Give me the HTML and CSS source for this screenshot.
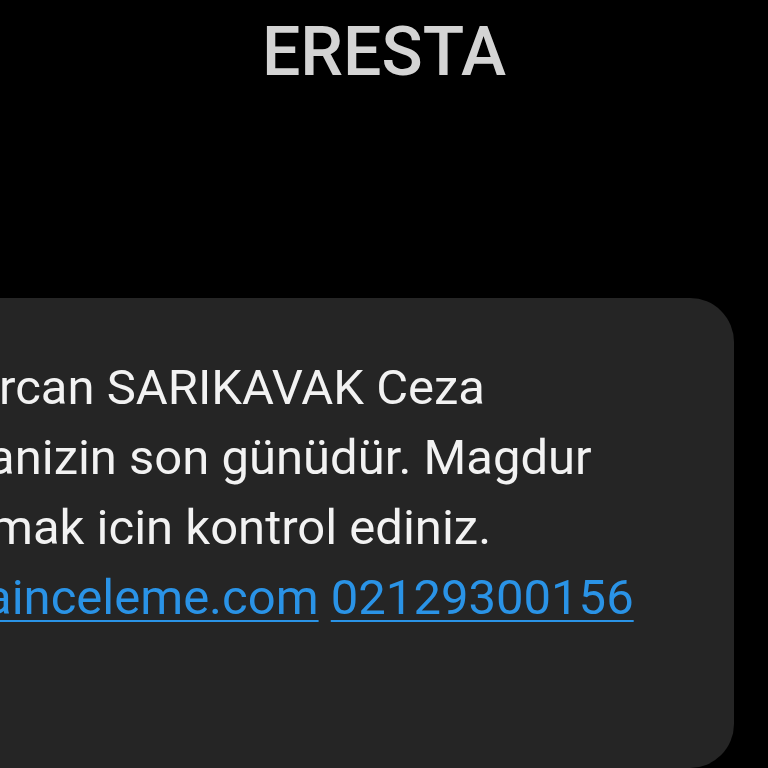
FILE: index.html
```html
<!DOCTYPE html>
<html lang="tr">
<head>
<meta charset="utf-8">
<title>ERESTA</title>
<link rel="stylesheet" href="styles.css">
</head>
<body>
<div class="screen">
  <header class="title">ERESTA</header>
  <div class="bubble">
    <div class="line l1">rcan SARIKAVAK Ceza</div>
    <div class="line l2">anizin son günüdür. Magdur</div>
    <div class="line l3">mak icin kontrol ediniz.</div>
    <div class="line l4"><a class="link" href="#">ainceleme.com</a> <a class="link" href="#">02129300156</a></div>
  </div>
</div>
</body>
</html>
```
FILE: styles.css
```css
html, body {
  margin: 0;
  padding: 0;
  background: #000;
}
.screen {
  width: 768px;
  height: 768px;
  overflow: hidden;
  background: #000;
  font-family: Roboto, "Noto Sans", sans-serif;
}
.title {
  padding-top: 18px;
  height: 68px;
  font-size: 68px;
  line-height: 68px;
  font-weight: 500;
  color: #d4d4d4;
  text-align: center;
}
.bubble {
  margin-top: 212px;
  margin-left: -60px;
  width: 794px;
  height: 470px;
  box-sizing: border-box;
  background: #252525;
  border-radius: 44px;
  padding-top: 55px;
  padding-left: 60px;
  color: #f2f2f2;
  font-size: 49px;
  line-height: 70px;
  white-space: nowrap;
}
.line {
  height: 70px;
}
.l1 { margin-left: -1px; }
.l2 { margin-left: -12px; }
.l3 { margin-left: -10px; }
.l4 { margin-left: -15px; }
.link {
  color: #2a93e6;
  text-decoration: underline;
  text-decoration-thickness: 2px;
  text-underline-offset: 6px;
}
```
